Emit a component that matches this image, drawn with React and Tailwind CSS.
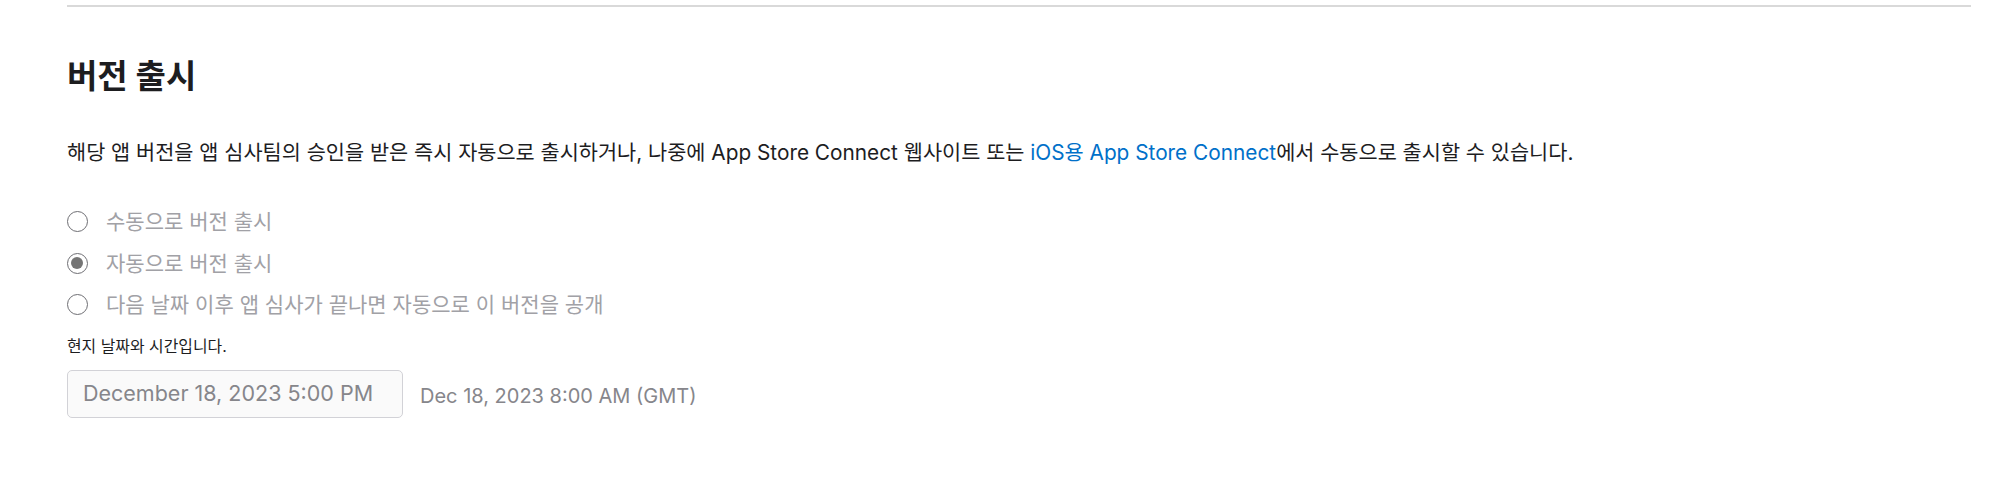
export default function App() {
  const font = { fontFamily: 'Inter, "Noto Sans CJK KR", sans-serif' };
  const Radio = ({ checked, label }) => (
    <label className="flex items-center h-[41.5px]">
      <span className="w-[21px] h-[21px] -ml-[0.5px] rounded-full border-[1.5px] border-[#6e6e73] flex items-center justify-center shrink-0">
        {checked && <span className="w-[12px] h-[12px] rounded-full bg-[#757575]" />}
      </span>
      <span className="ml-[18.5px] text-[21px] text-[#a1a1a6]">{label}</span>
    </label>
  );
  return (
    <div className="w-[2000px] h-[501px] bg-white" style={font}>
      <div className="pt-[5px] pl-[67px] pr-[29px]">
        <div className="h-[2px] bg-[#d9d9d9]" />
        <h2 className="mt-[51px] text-[33px] leading-[36px] font-bold text-[#1d1d1f]">버전 출시</h2>
        <p className="mt-[44px] text-[20.8px] leading-[30px] text-[#1d1d1f]">
          해당 앱 버전을 앱 심사팀의 승인을 받은 즉시 자동으로 출시하거나, 나중에 App Store Connect 웹사이트 또는{' '}
          <a className="text-[#0070c9]">iOS용 App Store Connect</a>에서 수동으로 출시할 수 있습니다.
        </p>
        <div className="mt-[33px] flex flex-col">
          <Radio label="수동으로 버전 출시" />
          <Radio checked label="자동으로 버전 출시" />
          <Radio label="다음 날짜 이후 앱 심사가 끝나면 자동으로 이 버전을 공개" />
        </div>
        <div className="mt-[10px] text-[15.9px] leading-[22px] text-[#1d1d1f]">현지 날짜와 시간입니다.</div>
        <div className="mt-[12px] flex items-center">
          <div className="w-[336px] h-[48px] border border-[#d2d2d7] rounded-[5px] bg-[#fafafa] flex items-center pl-[15px] text-[21.5px] text-[#86868b]">
            December 18, 2023 5:00 PM
          </div>
          <div className="ml-[17px] mt-[4px] text-[20px] text-[#86868b]">Dec 18, 2023 8:00 AM (GMT)</div>
        </div>
      </div>
    </div>
  );
}
